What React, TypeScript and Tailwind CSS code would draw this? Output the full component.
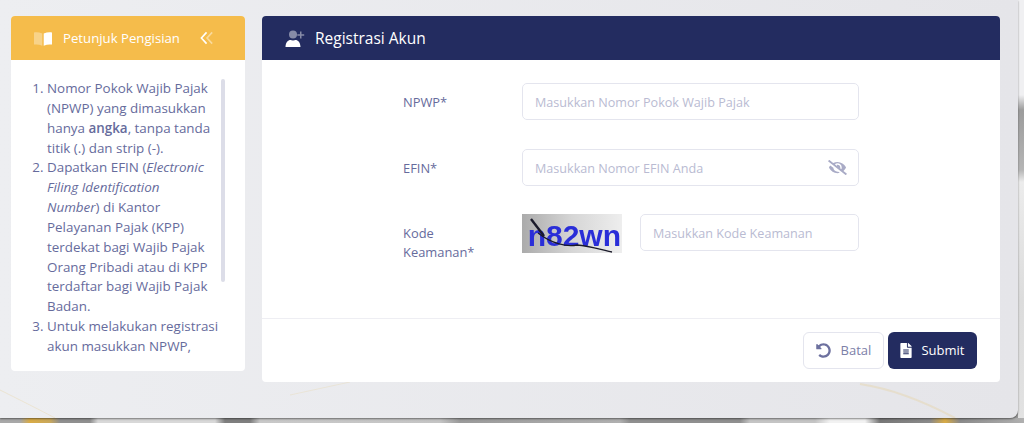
import { FaEyeSlash, FaFileAlt, FaUndoAlt } from 'react-icons/fa';

function BookIcon() {
  return (
    <svg viewBox="0 0 20 16" className="w-[18px] h-[15px]" fill="#fff">
      <path opacity="0.35" d="M0 1.2C3 0.6 6 1 9.2 2.4V16C6 14.6 3 14.2 0 14.8Z" />
      <path d="M10.8 2.4C14 1 17 0.6 20 1.2V14.8C17 14.2 14 14.6 10.8 16Z" />
    </svg>
  );
}

function BackIcon() {
  return (
    <svg viewBox="0 0 16 14" className="w-[15px] h-[14px]" fill="none" stroke="#fff" strokeWidth="1.700">
      <path d="M7 1 1.500 7 7 13" />
      <path opacity="0.45" d="M13 1 7.500 7 13 13" />
    </svg>
  );
}

function UserAddIcon() {
  return (
    <svg viewBox="0 0 20 17" className="w-5 h-[17px]" fill="#fff">
      <circle cx="8" cy="4.500" r="4" opacity="0.45" />
      <path opacity="0.45" d="M15 1.500h1.500v2.700h2.700v1.500h-2.700v2.700H15V5.700h-2.700V4.200H15Z" />
      <path d="M0.500 17c0-4.500 2.600-7 5-7 1 .6 4 .6 5 0 2.400 0 5 2.500 5 7Z" />
    </svg>
  );
}

function Captcha() {
  return (
    <div className="relative flex items-center justify-end pr-[1px] w-[100px] h-[39px] overflow-hidden bg-gradient-to-r from-[#ababab] via-[#d6d6d6] to-[#eeeeee]">
      <span className="pt-[5px] text-[30px] leading-none font-bold text-[#2a2ed8] blur-[0.5px] [font-family:'Liberation_Sans',sans-serif]">
        n82wn
      </span>
      <svg viewBox="0 0 100 39" className="absolute inset-0 w-full h-full" fill="none" stroke="#1a1a2a">
        <path d="M9 5 22 22" strokeWidth="2.400" />
        <path d="M16 19C30 30 45 33 55 31 68 32 80 36 90 38" strokeWidth="1.300" />
      </svg>
    </div>
  );
}

const inputClass =
  'flex items-center h-[37px] pl-[12px] pr-[11px] rounded-[5px] border border-[#e4e5ee] bg-white text-[12.600px] text-[#b9bbd2]';

export default function App() {
  return (
    <div className="flex flex-col h-[423px] overflow-hidden bg-[#9a9a9a] [font-family:'Open_Sans','Noto_Sans',sans-serif]">
      <div className="flex h-[418px]">
        <div className="relative flex items-start gap-[17px] w-[1018px] h-[418px] pt-4 pl-[11px] rounded-br-lg bg-gradient-to-r from-[#edeef1] to-[#e5e5e9] shadow-[0_1px_2px_rgba(0,0,0,0.45)]">
          <svg viewBox="0 0 1018 418" className="absolute inset-0 w-full h-full" fill="none" stroke="#e8c878" strokeOpacity="0.25">
            <path d="M0 390C20 400 40 410 55 418" />
            <path d="M860 384C900 390 940 410 955 418" strokeWidth="2" />
            <path d="M290 395 350 382" strokeOpacity="0.2" />
          </svg>
          <div className="relative w-[234px] h-[355px] rounded-[4px] bg-white overflow-hidden">
            <div className="flex items-center h-[44px] pl-[23px] bg-[#f5bc4b] text-white">
              <BookIcon />
              <span className="ml-[11px] pt-[1px] text-[13.200px]">Petunjuk Pengisian</span>
              <span className="ml-[20px]">
                <BackIcon />
              </span>
            </div>
            <div className="relative h-[276px] mt-[19px] pl-[22px] pr-[20px] overflow-hidden">
              <ol className="list-decimal pl-[14px] whitespace-nowrap text-[13.400px] leading-[19.850px] font-medium text-[#666b9c]">
                <li>
                  Nomor Pokok Wajib Pajak
                  <br />
                  (NPWP) yang dimasukkan
                  <br />
                  hanya <b className="font-semibold">angka</b>, tanpa tanda
                  <br />
                  titik (.) dan strip (-).
                </li>
                <li>
                  Dapatkan EFIN (<i>Electronic</i>
                  <br />
                  <i>Filing Identification</i>
                  <br />
                  <i>Number</i>) di Kantor
                  <br />
                  Pelayanan Pajak (KPP)
                  <br />
                  terdekat bagi Wajib Pajak
                  <br />
                  Orang Pribadi atau di KPP
                  <br />
                  terdaftar bagi Wajib Pajak
                  <br />
                  Badan.
                </li>
                <li>
                  Untuk melakukan registrasi
                  <br />
                  akun masukkan NPWP,
                  <br />
                  EFIN, dan kode keamanan.
                </li>
              </ol>
              <div className="absolute top-0 right-[20px] w-1 h-[203px] rounded bg-[#dcdde8]" />
            </div>
          </div>

          <div className="relative flex flex-col w-[738px] h-[366px] rounded-[4px] bg-white overflow-hidden">
            <div className="flex items-center h-[44px] pl-[23px] bg-[#232c60] text-white">
              <UserAddIcon />
              <span className="ml-[10px] pt-[1px] text-[15.500px] font-medium">Registrasi Akun</span>
            </div>

            <div className="flex-1 flex flex-col pt-[23px] pl-[141px] text-[12.900px] text-[#666b9c]">
              <div className="flex items-center">
                <label className="w-[119px] pt-[3px]">NPWP*</label>
                <div className={`${inputClass} w-[337px]`}>
                  <span className="pt-[3px]">Masukkan Nomor Pokok Wajib Pajak</span>
                </div>
              </div>
              <div className="flex items-center mt-[29px]">
                <label className="w-[119px] pt-[3px]">EFIN*</label>
                <div className={`${inputClass} w-[337px] justify-between`}>
                  <span className="pt-[3px]">Masukkan Nomor EFIN Anda</span>
                  <FaEyeSlash className="w-[19px] h-[15px] text-[#a9abc6]" />
                </div>
              </div>
              <div className="flex items-start mt-[28px]">
                <label className="w-[119px] pt-[10px] leading-[19px]">
                  Kode
                  <br />
                  Keamanan*
                </label>
                <Captcha />
                <div className={`${inputClass} w-[219px] ml-[18px]`}>
                  <span className="pt-[3px]">Masukkan Kode Keamanan</span>
                </div>
              </div>
            </div>

            <div className="flex justify-end gap-1 h-[64px] pt-[13px] pr-[23px] border-t border-[#eeeef3]">
              <button className="flex items-center justify-center gap-[10px] w-[81px] h-[37px] rounded-[6px] border border-[#e4e5ee] bg-white text-[13px] text-[#7c80a8]">
                <FaUndoAlt className="w-[15px] h-[15px] text-[#6d719f]" />
                <span className="pt-[1px]">Batal</span>
              </button>
              <button className="flex items-center justify-center gap-[9px] w-[89px] h-[37px] rounded-[6px] bg-[#232c60] text-[13px] text-white">
                <FaFileAlt className="w-3 h-[15px]" />
                <span className="pt-[1px]">Submit</span>
              </button>
            </div>
          </div>
        </div>
        <div className="flex-1 bg-[linear-gradient(180deg,#f0f0f2_0,#f0f0f2_95px,#9c9c9c_110px,#b5b5b5_170px,#ececec_182px,#dcdcdc_300px,#e2e2e2_418px)]" />
      </div>
      <div className="flex-1 bg-[linear-gradient(90deg,#a8a8a8_0,#a8a8a8_20px,#d9ab45_30px,#c9a85c_50px,#8f8f8f_60px,#8f8f8f_90px,#d8d8d8_98px,#d8d8d8_215px,#7f7f7f_225px,#7f7f7f_250px,#c8c8c8_260px,#c4c4c4_440px,#9a9a9a_460px,#b0b0b0_620px,#8f8f8f_630px,#8f8f8f_740px,#c4c4c4_750px,#c4c4c4_815px,#f2f2f2_830px,#f2f2f2_865px,#777777_880px,#8a8a8a_930px,#d9ab45_945px,#8a8a8a_960px,#b0b0b0_1024px)]" />
    </div>
  );
}
